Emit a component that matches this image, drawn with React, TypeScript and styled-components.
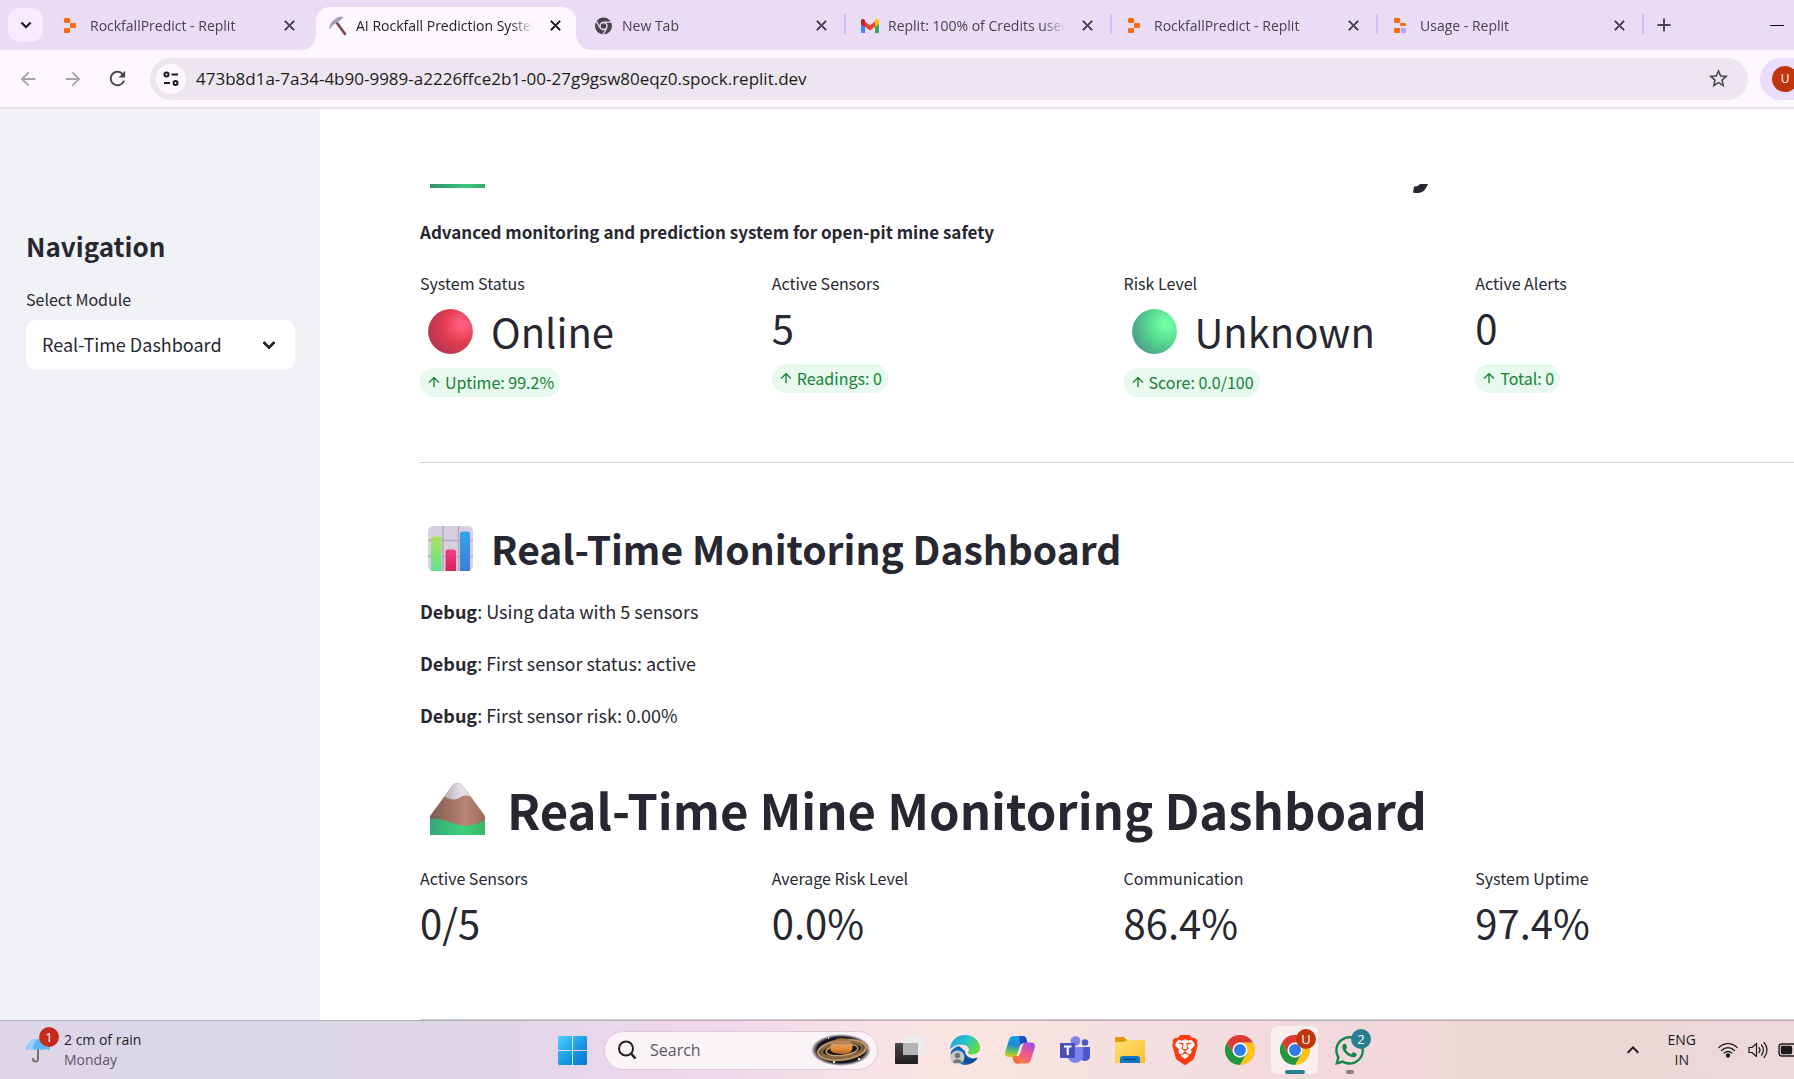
import React from "react";
import styled, { createGlobalStyle } from "styled-components";
import {
  MdAdd,
  MdArrowBack,
  MdArrowForward,
  MdArrowUpward,
  MdClose,
  MdKeyboardArrowDown,
  MdKeyboardArrowUp,
  MdRefresh,
  MdStarBorder,
} from "react-icons/md";
import { FaWhatsapp } from "react-icons/fa";
import { SiBrave } from "react-icons/si";

const uiFont = `"Open Sans", "Noto Sans", sans-serif`;
const appFont = `"Noto Sans CJK SC", "Noto Sans", sans-serif`;
const ink = "#262730";

const GlobalStyle = createGlobalStyle`
  * { box-sizing: border-box; }
  html, body { margin: 0; height: 100%; overflow: hidden; }
  button, input, select { font: inherit; color: inherit; border: 0; padding: 0; margin: 0; background: none; outline: none; }
  svg { display: block; flex: none; }
`;

const Screen = styled.div`
  height: 100vh;
  display: flex;
  flex-direction: column;
  overflow: hidden;
  font-family: ${uiFont};
  color: ${ink};
`;

/* ---------- Browser chrome ---------- */

const TabStrip = styled.div`
  flex: none;
  display: flex;
  align-items: center;
  height: 50px;
  padding-left: 8px;
  background: #eadcf5;
  color: #4a4050;
`;

const TabSearch = styled.button`
  flex: none;
  display: grid;
  place-items: center;
  width: 35px;
  height: 34px;
  margin-right: 5px;
  border-radius: 12px;
  background: #f7ecfe;
  color: #1d1b20;
  path:last-child {
    stroke-width: 1;
  }
`;

const Tab = styled.div<{ $active?: boolean; $divided?: boolean }>`
  position: relative;
  flex: 0 1 266px;
  min-width: 0;
  height: 43px;
  align-self: flex-end;
  display: flex;
  align-items: center;
  padding: 0 16px 6px 15px;
  color: ${(p) => (p.$active ? "#1d1b20" : "inherit")};
  ${(p) =>
    p.$active &&
    `
    flex-basis: 260px;
    margin: 0 4px 0 2px;
    padding: 0 12px 6px 13px;
    background: #fdf7ff;
    border-radius: 14px 14px 0 0;
    &::before, &::after {
      content: "";
      position: absolute;
      bottom: 0;
      width: 14px;
      height: 14px;
    }
    &::before { left: -14px; background: radial-gradient(circle at 0 0, transparent 13px, #fdf7ff 14px); }
    &::after { right: -14px; background: radial-gradient(circle at 100% 0, transparent 13px, #fdf7ff 14px); }
  `}
  ${(p) =>
    p.$divided &&
    `
    &::after {
      content: "";
      position: absolute;
      right: 0;
      top: 7px;
      width: 2px;
      height: 20px;
      border-radius: 1px;
      background: #d6bcfa;
    }
  `}
`;

const TabTitle = styled.button`
  flex: 1;
  min-width: 0;
  display: flex;
  align-items: center;
  gap: 9px;
  text-align: left;
  font-size: 14px;
  line-height: 20px;
`;

const TabText = styled.span`
  flex: 1;
  overflow: hidden;
  white-space: nowrap;
  mask-image: linear-gradient(to right, #000 calc(100% - 24px), transparent);
`;

const TabClose = styled.button`
  flex: none;
  display: grid;
  place-items: center;
  width: 18px;
  height: 18px;
  margin-left: 12px;
  path:last-child {
    stroke-width: 1;
  }
`;

const NewTab = styled.button`
  flex: none;
  display: grid;
  place-items: center;
  width: 40px;
  height: 36px;
`;

const Minimize = styled.button`
  flex: none;
  width: 34px;
  height: 30px;
  margin-left: auto;
  display: grid;
  place-items: center;
  &::after {
    content: "";
    width: 14px;
    height: 1px;
    background: #111;
  }
`;

const Toolbar = styled.div`
  flex: none;
  display: flex;
  align-items: center;
  height: 59px;
  padding-left: 5px;
  background: #fdf7ff;
  border-bottom: 2px solid #e9e0ec;
  overflow: hidden;
`;

const ToolButton = styled.button<{ $off?: boolean }>`
  flex: none;
  display: grid;
  place-items: center;
  width: 45px;
  height: 40px;
  color: ${(p) => (p.$off ? "#a8a2ac" : "#49454e")};
`;

const AddressBar = styled.div`
  flex: 1;
  min-width: 0;
  display: flex;
  align-items: center;
  gap: 10px;
  height: 42px;
  margin-left: 10px;
  padding: 0 18px 0 6px;
  border-radius: 21px;
  background: #ede6f1;
  color: #1d1b20;
`;

const SiteInfo = styled.button`
  flex: none;
  display: grid;
  place-items: center;
  width: 30px;
  height: 30px;
  border-radius: 15px;
  background: #fdf7ff;
`;

const AddressInput = styled.input`
  flex: 1;
  min-width: 0;
  height: 30px;
  font-size: 17px;
`;

const Profile = styled.button`
  flex: none;
  display: flex;
  align-items: center;
  width: 70px;
  height: 42px;
  margin: 0 -36px 0 12px;
  padding-left: 12px;
  border-radius: 21px;
  background: #ecdcfd;
`;

const Avatar = styled.span`
  display: grid;
  place-items: center;
  width: 26px;
  height: 26px;
  border-radius: 13px;
  background: #bf360c;
  color: #fff;
  font-size: 12px;
`;

/* ---------- Dashboard page ---------- */

const Page = styled.div`
  flex: 1;
  min-height: 0;
  display: flex;
  overflow: hidden;
  background: #fff;
  font-family: ${appFont};
`;

const Sidebar = styled.aside`
  flex: none;
  width: 320px;
  padding: 117px 25px 0 26px;
  background: #f0f2f6;
`;

const SidebarTitle = styled.h2`
  margin: 0 0 22px;
  font-size: 26px;
  line-height: 40px;
  font-weight: 600;
`;

const SelectLabel = styled.label`
  display: block;
  margin-bottom: 10px;
  font-size: 16px;
  line-height: 22px;
`;

const SelectBox = styled.div`
  position: relative;
  svg {
    position: absolute;
    right: 14px;
    top: 13px;
    pointer-events: none;
  }
  path:last-child {
    stroke-width: 1;
  }
`;

const ModuleSelect = styled.select`
  appearance: none;
  width: 100%;
  height: 50px;
  padding: 0 16px 2px;
  border-radius: 10px;
  background: #fff;
  font-size: 18px;
`;

const Main = styled.main`
  flex: 1;
  min-width: 0;
  overflow: hidden;
  padding: 75px 0 0 100px;
`;

const ScrolledTitle = styled.div`
  display: flex;
  justify-content: space-between;
  width: 1008px;
  max-width: 100%;
  height: 9px;
  margin-bottom: 25px;
  padding-left: 10px;
`;

const Lead = styled.p`
  margin: 0 0 25px;
  font-size: 17px;
  line-height: 28px;
  font-weight: 600;
`;

const Paragraph = styled.p`
  margin: 0 0 24px;
  font-size: 18px;
  line-height: 28px;
`;

const Metrics = styled.section`
  display: grid;
  grid-template-columns: repeat(4, 1fr);
  column-gap: 20px;
  margin-right: -13px;
`;

const MetricLabel = styled.div`
  font-size: 16px;
  line-height: 24px;
`;

const MetricValue = styled.div<{ $tall?: boolean }>`
  display: flex;
  align-items: center;
  height: ${(p) => (p.$tall ? 68 : 64)}px;
  padding-top: ${(p) => (p.$tall ? 4 : 0)}px;
  font-size: 40px;
  line-height: 60px;
  white-space: nowrap;
`;

const EmojiSlot = styled.span<{ $wide?: boolean }>`
  flex: none;
  padding: ${(p) => (p.$wide ? "0 22px 0 10px" : "0 18px 0 8px")};
`;

const Delta = styled.span`
  display: inline-flex;
  align-items: center;
  gap: 3px;
  height: 29px;
  margin-top: 5px;
  padding: 0 6px 1px;
  border-radius: 15px;
  background: #e8f9ee;
  color: #158237;
  font-size: 16px;
`;

const Rule = styled.hr<{ $gap: number }>`
  height: 1px;
  margin: ${(p) => p.$gap}px -13px 0 0;
  border: 0;
  background: #d0d1d4;
`;

const SectionTitle = styled.h2`
  display: flex;
  align-items: center;
  margin: 55px 0 19px;
  font-size: 39px;
  line-height: 60px;
  font-weight: 600;
  white-space: nowrap;
`;

const PageTitle = styled.h1`
  display: flex;
  align-items: center;
  margin: 42px 0 19px;
  font-size: 49px;
  line-height: 76px;
  font-weight: 700;
  white-space: nowrap;
`;

/* ---------- Taskbar ---------- */

const Taskbar = styled.footer`
  flex: none;
  display: grid;
  grid-template-columns: 57fr auto 43fr;
  align-items: center;
  height: 59px;
  overflow: hidden;
  border-top: 1px solid #b5b0b8;
  background: linear-gradient(
    to right,
    #dcd6e7 0%,
    #dad6e8 16%,
    #dfd6e7 28%,
    #ead6ea 34%,
    #f0d6ea 39%,
    #f6e0e6 46%,
    #fae5e2 54%,
    #f4dfe1 64%,
    #f2d8dc 75%,
    #ebd7d4 84%,
    #ecd8d9 100%
  );
`;

const Weather = styled.button`
  justify-self: start;
  display: flex;
  align-items: center;
  gap: 14px;
  padding-left: 26px;
  text-align: left;
  font-size: 14px;
  line-height: 20px;
  color: #1f1f24;
`;

const WeatherIcon = styled.span`
  position: relative;
  width: 24px;
  height: 26px;
`;

const Muted = styled.span`
  display: block;
  color: #5d5966;
`;

const Badge = styled.span<{ $bg: string }>`
  position: absolute;
  right: -9px;
  top: -10px;
  display: grid;
  place-items: center;
  width: 20px;
  height: 20px;
  border-radius: 10px;
  background: ${(p) => p.$bg};
  color: #fff;
  font-size: 13px;
  line-height: 20px;
`;

const AppBar = styled.nav`
  display: flex;
  align-items: center;
`;

const SearchBox = styled.label`
  display: flex;
  align-items: center;
  gap: 13px;
  width: 274px;
  height: 39px;
  margin: 0 8px;
  padding: 0 6px 0 12px;
  border: 1px solid #dccbdc;
  border-radius: 20px;
  background: #faf4f9;
`;

const SearchInput = styled.input`
  flex: 1;
  min-width: 0;
  font-size: 16px;
  &::placeholder {
    color: #5c585e;
    opacity: 1;
  }
`;

const AppButton = styled.button<{ $active?: boolean }>`
  position: relative;
  display: grid;
  place-items: center;
  width: 47px;
  height: 48px;
  margin-right: 8px;
  border-radius: 6px;
  background: ${(p) => (p.$active ? "#f9eef0" : "transparent")};
  &:last-child {
    margin-right: 0;
  }
`;

const StartButton = styled.button`
  display: grid;
  place-items: center;
  width: 29px;
  height: 48px;
  margin-right: 9px;
`;

const AppBadge = styled(Badge)`
  right: 2px;
  top: 3px;
`;

const Running = styled.span<{ $wide?: boolean }>`
  position: absolute;
  left: calc(50% - ${(p) => (p.$wide ? 10 : 4)}px);
  bottom: 0;
  width: ${(p) => (p.$wide ? 20 : 8)}px;
  height: 4px;
  border-radius: 2px;
  background: ${(p) => (p.$wide ? "#27808f" : "#8b7e82")};
`;

const Tray = styled.div`
  justify-self: end;
  display: flex;
  align-items: center;
  margin-right: -10px;
  color: #1b1a1c;
`;

const TrayButton = styled.button`
  display: flex;
  align-items: center;
  gap: 10px;
`;

const Language = styled.button`
  margin: 0 22px 0 23px;
  font-size: 14px;
  line-height: 20px;
  text-align: center;
`;

/* ---------- Drawings ---------- */

const ReplitIcon = ({ usage }: { usage?: boolean }) => (
  <svg width="18" height="18" viewBox="0 0 18 18">
    <rect x="1" y="1" width="6" height="5" rx="1" fill="#ff6a13" />
    <rect x="7" y="6" width="6" height={usage ? 3 : 5} rx="1" fill="#ff6a13" />
    <rect x="1" y="11" width="6" height="5" rx="1" fill="#ff6a13" />
    {usage && <rect x="8" y="11" width="5" height="5" rx="1" fill="#b9a0fb" />}
  </svg>
);

const PickIcon = () => (
  <svg width="18" height="20" viewBox="0 0 18 20">
    <path d="M8 7 16 18" stroke="#7c4a4d" strokeWidth="2.600" strokeLinecap="round" />
    <path d="M0.500 12.500C2 6 6 1.500 13.500 1 13 3.500 10 4 8.500 6 6 7 3 9 0.500 12.500Z" fill="#a79fba" stroke="#a098b2" />
  </svg>
);

const DarkChromeIcon = () => (
  <svg width="18" height="18" viewBox="0 0 18 18">
    <circle cx="8.500" cy="9" r="8.500" fill="#45474b" />
    <path d="M8.500 5.200H17M5.200 11 1 3.800M11.800 11 7.600 18" stroke="#eadcf5" strokeWidth="1.300" />
    <circle cx="8.500" cy="9" r="4.200" fill="#eadcf5" />
    <circle cx="8.500" cy="9" r="2.800" fill="#45474b" />
  </svg>
);

const GmailIcon = () => (
  <svg width="18" height="18" viewBox="0 0 18 18">
    <path d="M0 4v11a1 1 0 0 0 1 1h3V6z" fill="#4285f4" />
    <path d="M18 4v11a1 1 0 0 1-1 1h-3V6z" fill="#34a853" />
    <path d="M4 4.500 9 8.300l5-3.800v5.200l-5 3.800-5-3.800z" fill="#ea4335" />
    <path d="M0 4C0 2 2 1.500 3.300 2.500L4 3v7L0 7z" fill="#c5221f" />
    <path d="M18 4c0-2-2-2.500-3.300-1.500L14 3v7l4-3z" fill="#fbbc04" />
  </svg>
);

const TuneIcon = () => (
  <svg width="18" height="18" viewBox="0 0 18 18" fill="none" stroke="#1d1b20" strokeWidth="2">
    <circle cx="4.500" cy="4.500" r="2" />
    <path d="M9.500 4.500H16M2 13h6" />
    <circle cx="13.500" cy="13" r="2" />
  </svg>
);

const Sphere = ({ id, light, mid, dark }: { id: string; light: string; mid: string; dark: string }) => (
  <svg width="45" height="45" viewBox="0 0 45 45">
    <defs>
      <radialGradient id={id} cx="0.76" cy="0.34" r="0.82">
        <stop offset="0.08" stopColor={light} />
        <stop offset="0.5" stopColor={mid} />
        <stop offset="1" stopColor={dark} />
      </radialGradient>
    </defs>
    <circle cx="22.500" cy="22.500" r="22.400" fill={`url(#${id})`} />
  </svg>
);

const ChartEmoji = () => (
  <svg width="45" height="45" viewBox="0 0 45 45">
    <defs>
      <linearGradient id="barG" x1="0" y1="0" x2="0" y2="1">
        <stop stopColor="#aee15c" />
        <stop offset="1" stopColor="#5fe392" />
      </linearGradient>
      <linearGradient id="barB" x1="0" y1="0" x2="0" y2="1">
        <stop stopColor="#33a5f3" />
        <stop offset="1" stopColor="#3f7bd0" />
      </linearGradient>
      <linearGradient id="barR" x1="0" y1="0" x2="0" y2="1">
        <stop stopColor="#f13f80" />
        <stop offset="1" stopColor="#d8235f" />
      </linearGradient>
    </defs>
    <rect width="45" height="45" rx="5" fill="#d8d0e0" />
    <path d="M15 0v45M30.500 0v45M0 14.500h45M0 30.500h45" stroke="#b1a9bd" strokeWidth="1.500" />
    <path d="M3 45V13a2.500 2.500 0 0 1 2.500-2.500h5.500a2.500 2.500 0 0 1 2.500 2.500v32z" fill="url(#barG)" />
    <path d="M17.500 45V26a2.500 2.500 0 0 1 2.500-2.500h5.500a2.500 2.500 0 0 1 2.500 2.500v19z" fill="url(#barR)" />
    <path d="M32 45V8a2.500 2.500 0 0 1 2.500-2.500h5A2.500 2.500 0 0 1 42 8v37z" fill="url(#barB)" />
  </svg>
);

const MountainEmoji = () => (
  <svg width="55" height="52" viewBox="0 0 55 52">
    <defs>
      <linearGradient id="rock" x1="0" x2="1">
        <stop stopColor="#7e5a52" />
        <stop offset="0.65" stopColor="#ba8574" />
        <stop offset="1" stopColor="#9c6a5e" />
      </linearGradient>
      <linearGradient id="grass" x1="0" x2="1">
        <stop stopColor="#36a878" />
        <stop offset="0.6" stopColor="#3ed07c" />
        <stop offset="1" stopColor="#37b768" />
      </linearGradient>
      <linearGradient id="snow" x1="0" x2="1">
        <stop stopColor="#b5afb5" />
        <stop offset="0.6" stopColor="#e3dde8" />
      </linearGradient>
    </defs>
    <path d="M0 33 22 3c3-4 8-4 11 0l22 30v11H0z" fill="url(#rock)" />
    <path d="M14.500 13.500 22 3c3-4 8-4 11 0l7.500 10.500c-5-2-8-1-12 2-4 2-9 1-14-2z" fill="url(#snow)" />
    <path d="M0 36c9-1 15 1 22 4 10 4 22 4 33-3v15H0z" fill="url(#grass)" />
  </svg>
);

const GrassEdge = () => (
  <svg width="55" height="4" viewBox="0 0 55 4">
    <defs>
      <linearGradient id="edge" x1="0" x2="1">
        <stop stopColor="#33906f" />
        <stop offset="0.7" stopColor="#3bcb79" />
        <stop offset="1" stopColor="#35a767" />
      </linearGradient>
    </defs>
    <rect width="55" height="4" fill="url(#edge)" />
  </svg>
);

const Descender = () => (
  <svg width="15" height="9" viewBox="0 0 15 9">
    <path d="M1 2.500C4 3 5.500 1.500 7 0H15C13 5 10 9 5 9 3 9 1 8.800 0 8.400z" fill={ink} />
  </svg>
);

const UmbrellaIcon = () => (
  <svg width="24" height="26" viewBox="0 0 24 26">
    <path d="M12 12v10a2.500 2.500 0 0 1-5 0V21" fill="none" stroke="#77706f" strokeWidth="2" />
    <path d="M0 13C1 5 6 2 12 2s11 3 12 11l-4-1-4 1-4-1-4 1-4-1z" fill="#5fb4f6" />
    <path d="M0 13C1 5 6 2 12 2 8 5 7 9 8 13l-4-1z" fill="#92d0fb" />
  </svg>
);

const WindowsIcon = () => (
  <svg width="29" height="29" viewBox="0 0 29 29">
    <defs>
      <linearGradient id="win" x1="0" y1="0" x2="1" y2="1">
        <stop stopColor="#4cd0fd" />
        <stop offset="0.6" stopColor="#1594e2" />
        <stop offset="1" stopColor="#0875cf" />
      </linearGradient>
    </defs>
    <path d="M1 0h13v14H0V1zM15 0h13l1 1v13H15zM0 15h14v14H1l-1-1zM15 15h14v13l-1 1H15z" fill="url(#win)" />
  </svg>
);

const SearchIcon = () => (
  <svg width="20" height="20" viewBox="0 0 20 20" fill="none" stroke="#242226" strokeWidth="2">
    <circle cx="9" cy="8.500" r="7" />
    <path d="m14 13.500 4.500 5" strokeWidth="2.600" />
  </svg>
);

const SaturnIcon = () => (
  <svg width="60" height="32" viewBox="0 0 60 32">
    <defs>
      <radialGradient id="space">
        <stop offset="0.8" stopColor="#16141f" />
        <stop offset="1" stopColor="#16141f" stopOpacity="0" />
      </radialGradient>
      <linearGradient id="planet" x1="0" y1="0" x2="0" y2="1">
        <stop stopColor="#8d6039" />
        <stop offset="0.4" stopColor="#d9a06a" />
        <stop offset="0.7" stopColor="#ea8a2e" />
        <stop offset="1" stopColor="#a0602c" />
      </linearGradient>
    </defs>
    <ellipse cx="30" cy="16" rx="30" ry="16" fill="url(#space)" />
    <g transform="rotate(-7 31 16)" fill="none">
      <ellipse cx="31" cy="16" rx="24" ry="9.500" stroke="#b9935f" strokeWidth="2.500" />
      <ellipse cx="31" cy="16" rx="20.500" ry="7.500" stroke="#846644" strokeWidth="3" />
      <ellipse cx="31" cy="16" rx="16" ry="5.500" stroke="#c99d66" strokeWidth="1.500" />
    </g>
    <path d="M19.500 16C19 8 24 4 30.500 4S42 8 41.500 14c-1 5-5 6-10 6s-11-1-12-4z" fill="url(#planet)" />
    <path d="M21 9c6 1 14 1 19 0" fill="none" stroke="#7b4c2b" opacity=".5" />
    <path d="M17 3h1v2h-1zM47 24h2v2h-2zM22 27h2v2h-2zM10 26h1v1h-1zM57 13h1v2h-1z" fill="#f4e9b8" />
  </svg>
);

const TaskViewIcon = () => (
  <svg width="30" height="30" viewBox="0 0 30 30">
    <defs>
      <linearGradient id="tvd" x1="0" y1="0" x2="0" y2="1">
        <stop stopColor="#4a4a4a" />
        <stop offset="1" stopColor="#1e1e1e" />
      </linearGradient>
    </defs>
    <rect x="0" y="8" width="23" height="21" rx="1" fill="url(#tvd)" />
    <path d="M8 1a1 1 0 0 1 1-1h20a1 1 0 0 1 1 1v19H8z" fill="#ececed" />
    <path d="M8 8h15v12H8z" fill="#b3b4b5" />
  </svg>
);

const EdgeIcon = () => (
  <svg width="30" height="30" viewBox="0 0 30 30">
    <defs>
      <linearGradient id="edgeTop" x1="0" y1="0" x2="1" y2="0.5">
        <stop stopColor="#199cdc" />
        <stop offset="0.5" stopColor="#27bfd3" />
        <stop offset="1" stopColor="#5fdc4a" />
      </linearGradient>
    </defs>
    <path d="M9 11C2 13 0 17 1 20a15 15 0 0 0 14 10c5 0 10-3 12.500-7.500-5 2-12 0-12.500-6.500z" fill="#1367b8" />
    <path d="M9 17c-1 8 7 13 14 10.500 2-1 4-3 4.500-4.500-5 2.500-11 1.500-13-4z" fill="#0c4d94" />
    <path d="M0 15C0 6 7 0 15 0c9 0 15 6.500 15 12.500 0 5-4 7-8 7-3 0-5-1-4-2.500 2-2 1-6-4-7C8 9 2 11 0 15z" fill="url(#edgeTop)" />
    <circle cx="7.500" cy="22.500" r="7" fill="#c6c7c7" />
    <circle cx="7.500" cy="20.500" r="2.800" fill="#757575" />
    <path d="M3 28c0-5 9-5 9 0z" fill="#757575" />
  </svg>
);

const CopilotIcon = () => (
  <svg width="30" height="28" viewBox="0 0 30 28">
    <defs>
      <linearGradient id="cpA" x1="0.3" y1="0" x2="0.2" y2="1">
        <stop stopColor="#0ea4e9" />
        <stop offset="0.4" stopColor="#1e8ad6" />
        <stop offset="0.7" stopColor="#5fbf6b" />
        <stop offset="1" stopColor="#eccb16" />
      </linearGradient>
      <linearGradient id="cpB" x1="0.8" y1="0" x2="0.2" y2="1">
        <stop stopColor="#a24be8" />
        <stop offset="0.5" stopColor="#f0588a" />
        <stop offset="1" stopColor="#fb8a3c" />
      </linearGradient>
    </defs>
    <path d="M9 0h9c3 0 3.500 3 4.500 7H19c-3 0-4 2-5 6l-2 6c-1 1.500-2 2-4 2H4c-4 0-4.500-3-3.500-6L4 4c1-3 2.500-4 5-4z" fill="url(#cpA)" />
    <path d="M14 0h4c3 0 3.500 3 4.500 7H19c-2 0-3 1-3.500 2z" fill="#1b4fc0" />
    <path d="M21 27.500h-9c-3 0-3.500-3-4.500-7H11c3 0 4-2 5-6l2-6c1-1.500 2-2 4-2h4c4 0 4.500 3 3.500 6L26 23.500c-1 3-2.500 4-5 4z" fill="url(#cpB)" />
    <path d="M12.500 20c-2 0-4 .5-5 .5 1 4 1.500 7 4.500 7h3c-2-1-1.500-4-2.500-7.500z" fill="#f56d3b" />
  </svg>
);

const TeamsIcon = () => (
  <svg width="30" height="28" viewBox="0 0 30 28">
    <circle cx="15.500" cy="5" r="4.800" fill="#7b83eb" />
    <circle cx="25" cy="6.500" r="3.300" fill="#5059c9" />
    <path d="M21 11h9v9a5 5 0 0 1-9 3z" fill="#5059c9" />
    <path d="M8 11h15v10a8 8 0 0 1-15 1z" fill="#7b83eb" />
    <rect y="7" width="15" height="15" rx="1" fill="#4750b8" />
    <path d="M4 10.500h7.500M7.750 10.500v8.500" stroke="#fff" strokeWidth="2.200" />
  </svg>
);

const FolderIcon = () => (
  <svg width="30" height="28" viewBox="0 0 30 28">
    <defs>
      <linearGradient id="fold" x1="0" y1="0" x2="1" y2="1">
        <stop stopColor="#ffe176" />
        <stop offset="1" stopColor="#fbc02a" />
      </linearGradient>
    </defs>
    <path d="M0 2a1 1 0 0 1 1-1h8l3 3h10v6H0z" fill="#dd9d09" />
    <path d="M0 6h9l3-2h17a1 1 0 0 1 1 1v22H0z" fill="url(#fold)" />
    <path d="M5 27v-4a3 3 0 0 1 3-3h14a3 3 0 0 1 3 3v4z" fill="#0f77c5" />
    <path d="M9 23.500h12" stroke="#084a84" strokeWidth="1.500" />
  </svg>
);

const BraveIcon = () => (
  <svg width="30" height="30" viewBox="0 0 30 30">
    <path d="M7 6h16l2 6-3 11-7 5-7-5-3-11z" fill="#fff" />
    <SiBrave size={30} color="#fb3c12" />
  </svg>
);

const ChromeIcon = () => (
  <svg width="30" height="30" viewBox="0 0 48 48">
    <path d="M24 12h20.800A24 24 0 0 1 24 48L34.400 30z" fill="#fcc41a" />
    <path d="M3.200 12 13.600 30 24 36l10.400-6L24 48A24 24 0 0 1 3.200 12z" fill="#24963f" />
    <path d="M13.600 30 3.200 12a24 24 0 0 1 41.600 0H24z" fill="#dd3b31" />
    <circle cx="24" cy="24" r="12" fill="#fff" />
    <circle cx="24" cy="24" r="9.500" fill="#2f7bed" />
  </svg>
);

const WifiIcon = () => (
  <svg width="20" height="16" viewBox="0 0 20 16" fill="none" stroke="currentColor" strokeWidth="1.300" strokeLinecap="round">
    <path d="M1 5.500a12.500 12.500 0 0 1 18 0M3.500 8.500a9 9 0 0 1 13 0M6.200 11a5.500 5.500 0 0 1 7.600 0" />
    <circle cx="10" cy="13.500" r="1.500" fill="currentColor" />
  </svg>
);

const SpeakerIcon = () => (
  <svg width="20" height="18" viewBox="0 0 20 18" fill="none" stroke="currentColor" strokeWidth="1.200" strokeLinejoin="round" strokeLinecap="round">
    <path d="M1 6.500h3L8.500 2.500v13L4 11.500H1z" />
    <path d="M11 6.500a4 4 0 0 1 0 5M13.500 4a7.500 7.500 0 0 1 0 10M16 1.500a11 11 0 0 1 0 15" />
  </svg>
);

const BatteryIcon = () => (
  <svg width="26" height="14" viewBox="0 0 26 14" fill="none" stroke="currentColor" strokeWidth="1.400">
    <rect x="1" y="1" width="22" height="12" rx="3" />
    <rect x="3.500" y="3.500" width="10" height="7" rx="1" fill="currentColor" />
  </svg>
);

/* ---------- Data ---------- */

const tabs: { title: string; icon: React.ReactNode; active?: boolean; divided?: boolean }[] = [
  { title: "RockfallPredict - Replit", icon: <ReplitIcon /> },
  { title: "AI Rockfall Prediction System", icon: <PickIcon />, active: true },
  { title: "New Tab", icon: <DarkChromeIcon />, divided: true },
  { title: "Replit: 100% of Credits used", icon: <GmailIcon />, divided: true },
  { title: "RockfallPredict - Replit", icon: <ReplitIcon />, divided: true },
  { title: "Usage - Replit", icon: <ReplitIcon usage />, divided: true },
];

const statusMetrics = [
  {
    label: "System Status",
    value: "Online",
    delta: "Uptime: 99.2%",
    emoji: <Sphere id="redBall" light="#ff5e7e" mid="#e33d51" dark="#b3364f" />,
  },
  { label: "Active Sensors", value: "5", delta: "Readings: 0" },
  {
    label: "Risk Level",
    value: "Unknown",
    delta: "Score: 0.0/100",
    emoji: <Sphere id="greenBall" light="#70ffa5" mid="#56d98f" dark="#4c9a8c" />,
  },
  { label: "Active Alerts", value: "0", delta: "Total: 0" },
];

const mineMetrics = [
  { label: "Active Sensors", value: "0/5" },
  { label: "Average Risk Level", value: "0.0%" },
  { label: "Communication", value: "86.4%" },
  { label: "System Uptime", value: "97.4%" },
];

const debugLines = ["Using data with 5 sensors", "First sensor status: active", "First sensor risk: 0.00%"];

export default function App() {
  return (
    <Screen>
      <GlobalStyle />
      <TabStrip>
        <TabSearch aria-label="Search tabs">
          <MdKeyboardArrowDown size={20} />
        </TabSearch>
        {tabs.map((tab, i) => (
          <Tab key={i} $active={tab.active} $divided={tab.divided}>
            <TabTitle>
              {tab.icon}
              <TabText>{tab.title}</TabText>
            </TabTitle>
            <TabClose aria-label="Close tab">
              <MdClose size={17} />
            </TabClose>
          </Tab>
        ))}
        <NewTab aria-label="New tab">
          <MdAdd size={22} />
        </NewTab>
        <Minimize aria-label="Minimize" />
      </TabStrip>

      <Toolbar>
        <ToolButton $off aria-label="Back">
          <MdArrowBack size={22} />
        </ToolButton>
        <ToolButton $off aria-label="Forward">
          <MdArrowForward size={22} />
        </ToolButton>
        <ToolButton aria-label="Reload">
          <MdRefresh size={23} />
        </ToolButton>
        <AddressBar>
          <SiteInfo aria-label="Site information">
            <TuneIcon />
          </SiteInfo>
          <AddressInput
            aria-label="Address"
            readOnly
            value="473b8d1a-7a34-4b90-9989-a2226ffce2b1-00-27g9gsw80eqz0.spock.replit.dev"
          />
          <MdStarBorder size={23} color="#49454e" />
        </AddressBar>
        <Profile aria-label="Profile">
          <Avatar>U</Avatar>
        </Profile>
      </Toolbar>

      <Page>
        <Sidebar>
          <SidebarTitle>Navigation</SidebarTitle>
          <SelectLabel htmlFor="module">Select Module</SelectLabel>
          <SelectBox>
            <ModuleSelect id="module" defaultValue="dashboard">
              <option value="dashboard">Real-Time Dashboard</option>
            </ModuleSelect>
            <MdKeyboardArrowDown size={24} />
          </SelectBox>
        </Sidebar>
        <Main>
          <ScrolledTitle>
            <GrassEdge />
            <Descender />
          </ScrolledTitle>
          <Lead>Advanced monitoring and prediction system for open-pit mine safety</Lead>
          <Metrics>
            {statusMetrics.map((m) => (
              <div key={m.label}>
                <MetricLabel>{m.label}</MetricLabel>
                <MetricValue $tall={!!m.emoji}>
                  {m.emoji && <EmojiSlot>{m.emoji}</EmojiSlot>}
                  {m.value}
                </MetricValue>
                <Delta>
                  <MdArrowUpward size={16} />
                  {m.delta}
                </Delta>
              </div>
            ))}
          </Metrics>
          <Rule $gap={65} />
          <SectionTitle>
            <EmojiSlot>
              <ChartEmoji />
            </EmojiSlot>
            Real-Time Monitoring Dashboard
          </SectionTitle>
          {debugLines.map((line) => (
            <Paragraph key={line}>
              <strong>Debug</strong>: {line}
            </Paragraph>
          ))}
          <PageTitle>
            <EmojiSlot $wide>
              <MountainEmoji />
            </EmojiSlot>
            Real-Time Mine Monitoring Dashboard
          </PageTitle>
          <Metrics>
            {mineMetrics.map((m) => (
              <div key={m.label}>
                <MetricLabel>{m.label}</MetricLabel>
                <MetricValue>{m.value}</MetricValue>
              </div>
            ))}
          </Metrics>
          <Rule $gap={65} />
        </Main>
      </Page>

      <Taskbar>
        <Weather>
          <WeatherIcon>
            <UmbrellaIcon />
            <Badge $bg="#c42b1c">1</Badge>
          </WeatherIcon>
          <span>
            2 cm of rain
            <Muted>Monday</Muted>
          </span>
        </Weather>
        <AppBar>
          <StartButton aria-label="Start">
            <WindowsIcon />
          </StartButton>
          <SearchBox>
            <SearchIcon />
            <SearchInput aria-label="Search" placeholder="Search" />
            <SaturnIcon />
          </SearchBox>
          <AppButton aria-label="Task view">
            <TaskViewIcon />
          </AppButton>
          <AppButton aria-label="Edge">
            <EdgeIcon />
          </AppButton>
          <AppButton aria-label="Copilot">
            <CopilotIcon />
          </AppButton>
          <AppButton aria-label="Teams">
            <TeamsIcon />
          </AppButton>
          <AppButton aria-label="File Explorer">
            <FolderIcon />
          </AppButton>
          <AppButton aria-label="Brave">
            <BraveIcon />
          </AppButton>
          <AppButton aria-label="Chrome">
            <ChromeIcon />
          </AppButton>
          <AppButton $active aria-label="Chrome, profile U">
            <ChromeIcon />
            <AppBadge $bg="#bf360c">U</AppBadge>
            <Running $wide />
          </AppButton>
          <AppButton aria-label="WhatsApp">
            <FaWhatsapp size={33} color="#17864c" />
            <AppBadge $bg="#27808f">2</AppBadge>
            <Running />
          </AppButton>
        </AppBar>
        <Tray>
          <TrayButton aria-label="Show hidden icons">
            <MdKeyboardArrowUp size={24} />
          </TrayButton>
          <Language>
            ENG
            <br />
            IN
          </Language>
          <TrayButton aria-label="Network, volume and battery">
            <WifiIcon />
            <SpeakerIcon />
            <BatteryIcon />
          </TrayButton>
        </Tray>
      </Taskbar>
    </Screen>
  );
}
